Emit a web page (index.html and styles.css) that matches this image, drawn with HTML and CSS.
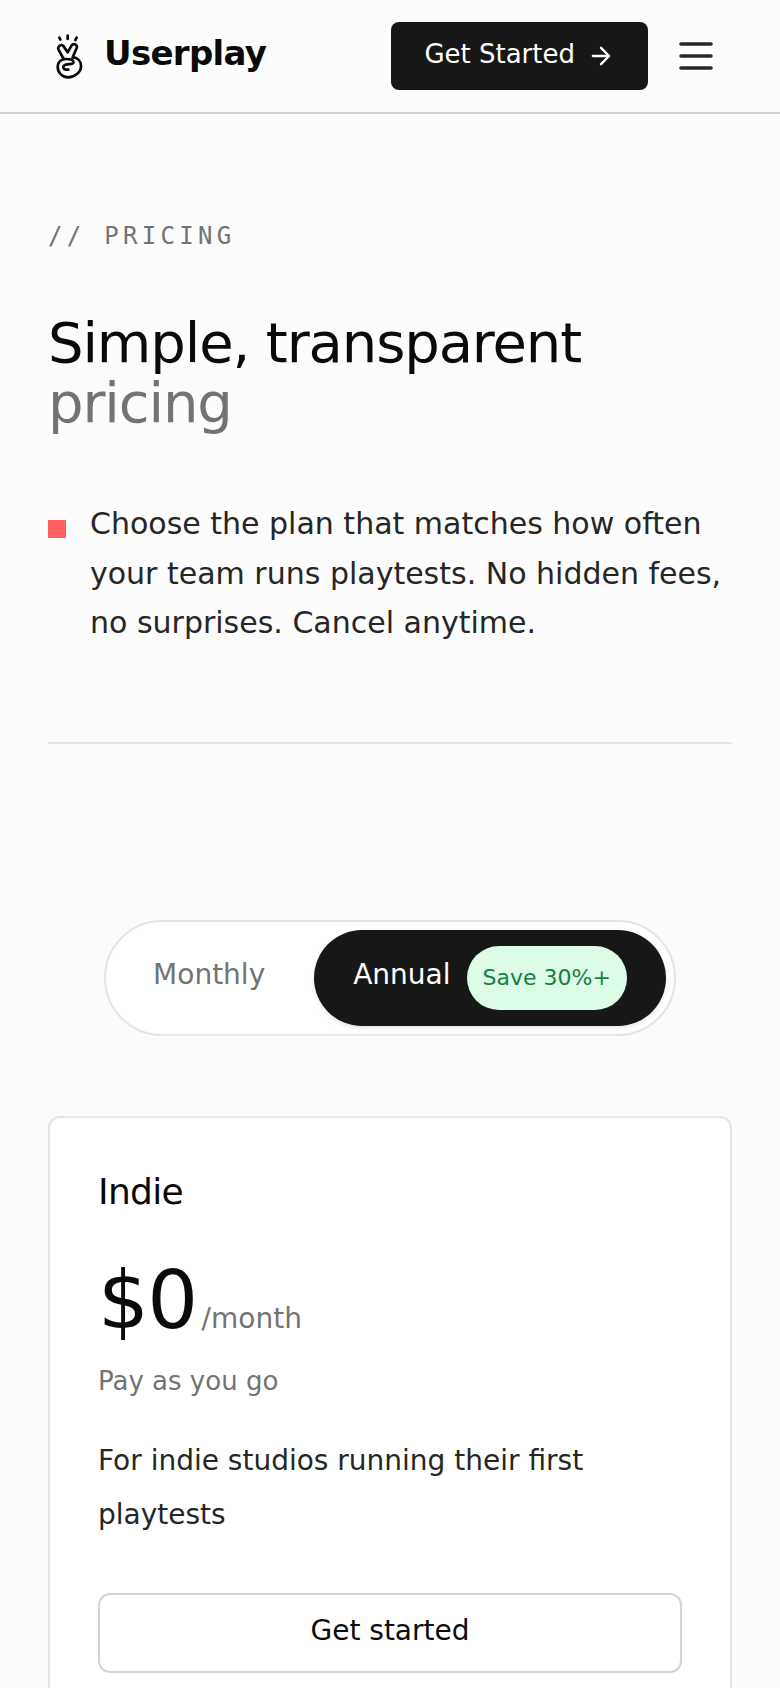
FILE: index.html
```html
<!DOCTYPE html>
<html lang="en">
<head>
    <meta charset="UTF-8">
    <meta name="viewport" content="width=device-width, initial-scale=1.0">
    <title>Userplay - Pricing</title>
    <link rel="stylesheet" href="styles.css">
</head>
<body>
    <!-- Header -->
    <header class="site-header">
        <a class="brand" href="#">
            <svg class="brand-icon" viewBox="0 0 84 135" fill="none" stroke="#0a0a0a" stroke-width="8" stroke-linecap="round" stroke-linejoin="round">
                <path d="M10 11l3 6M35 5v10M62 11l-4 7"/>
                <path d="M23 75L8 48C3 38 16 28 22 36L35 55L47 34C52 26 66 32 62 42L50 70C62 70 74 78 75 95C76 115 55 130 36 130C18 130 5 115 5 98C5 84 16 75 30 75C44 75 54 78 52 86C50 93 38 88 28 92C18 97 20 108 37 107"/>
            </svg>
            <span class="brand-name">Userplay</span>
        </a>
        <div class="header-actions">
            <a class="cta-btn" href="#">
                <span class="cta-label">Get Started</span>
                <svg class="cta-arrow" viewBox="0 0 24 24" fill="none" stroke="#fff" stroke-width="2" stroke-linecap="round" stroke-linejoin="round">
                    <path d="M5 12h14M12 5l7 7-7 7"/>
                </svg>
            </a>
            <button class="menu-btn" aria-label="Menu">
                <svg class="menu-icon" viewBox="0 0 34 28" fill="none" stroke="#262626" stroke-width="3.5" stroke-linecap="round">
                    <path d="M2 2h30M2 14h30M2 26h30"/>
                </svg>
            </button>
        </div>
    </header>

    <main class="page">
        <!-- Intro -->
        <section class="intro">
            <p class="eyebrow">// PRICING</p>
            <h1 class="headline">Simple, transparent <span class="headline-muted">pricing</span></h1>
            <div class="lead">
                <span class="lead-mark"></span>
                <p>Choose the plan that matches how often your team runs playtests. No hidden fees, no surprises. Cancel anytime.</p>
            </div>
        </section>

        <!-- Billing toggle -->
        <div class="toggle-wrap">
            <div class="toggle">
                <button class="toggle-option"><span class="toggle-label">Monthly</span></button>
                <button class="toggle-option active">
                    <span class="toggle-label">Annual</span>
                    <span class="save-badge">Save 30%+</span>
                </button>
            </div>
        </div>

        <!-- Plans -->
        <section class="plan-card">
            <h2 class="plan-name">Indie</h2>
            <div class="plan-price">
                <span class="price-value">$0</span>
                <span class="price-unit">/month</span>
            </div>
            <p class="plan-note">Pay as you go</p>
            <p class="plan-desc">For indie studios running their first playtests</p>
            <a class="plan-btn" href="#"><span class="plan-btn-label">Get started</span></a>
        </section>
    </main>
</body>
</html>
```

FILE: styles.css
```css
* {
    margin: 0;
    padding: 0;
    box-sizing: border-box;
}

html, body {
    height: 100%;
    overflow: hidden;
}

body {
    font-family: "DejaVu Sans", sans-serif;
    background-color: #fcfcfc;
    color: #0a0a0a;
}

a {
    color: inherit;
    text-decoration: none;
}

button {
    font-family: inherit;
    background: none;
    border: none;
    cursor: pointer;
}

/* Header */
.site-header {
    display: flex;
    align-items: center;
    justify-content: space-between;
    height: 114px;
    padding: 0 67px 0 56px;
    border-bottom: 2px solid #d4d4d4;
}

.brand {
    display: flex;
    align-items: center;
    gap: 20px;
}

.brand-icon {
    width: 28px;
    height: 45px;
}

.brand-name {
    font-size: 34px;
    font-weight: 700;
    letter-spacing: -0.68px;
    margin-top: -6px;
}

.header-actions {
    display: flex;
    align-items: center;
    gap: 31px;
}

.cta-btn {
    display: flex;
    align-items: center;
    gap: 12px;
    height: 68px;
    padding: 0 33px;
    background-color: #171717;
    color: #fff;
    font-size: 26px;
    border-radius: 8px;
}

.cta-label {
    margin-top: -5px;
}

.cta-arrow {
    width: 28px;
    height: 28px;
}

.menu-btn {
    display: flex;
}

.menu-icon {
    width: 34px;
    height: 28px;
}

/* Intro */
.page {
    padding: 0 48px;
}

.intro {
    padding: 108px 0 94px;
    border-bottom: 2px solid #e5e5e5;
}

.eyebrow {
    font-family: "DejaVu Sans Mono", monospace;
    font-size: 24px;
    letter-spacing: 4.3px;
    color: #737373;
    margin-bottom: 63px;
}

.headline {
    font-size: 56px;
    font-weight: 400;
    line-height: 60px;
    letter-spacing: -1.12px;
    margin-bottom: 66px;
}

.headline-muted {
    display: block;
    color: #737373;
}

.lead {
    display: flex;
    gap: 24px;
    align-items: flex-start;
}

.lead-mark {
    flex: none;
    width: 18px;
    height: 18px;
    margin-top: 21px;
    background-color: #ff5f5f;
}

.lead p {
    font-size: 30px;
    line-height: 49.5px;
    color: #262626;
}

/* Billing toggle */
.toggle-wrap {
    display: flex;
    justify-content: center;
    padding: 176px 0 80px;
}

.toggle {
    display: flex;
    align-items: center;
    gap: 8px;
    height: 116px;
    padding: 8px;
    background-color: #fff;
    border: 2px solid #e5e5e5;
    border-radius: 58px;
}

.toggle-option {
    display: flex;
    align-items: center;
    gap: 16px;
    height: 96px;
    padding: 0 41px 0 39px;
    font-size: 28px;
    color: #737373;
    border-radius: 48px;
}

.toggle-option.active {
    padding: 0 39px;
    background-color: #171717;
    color: #fff;
    box-shadow: 0 2px 4px rgba(0, 0, 0, 0.1);
}

.toggle-label {
    margin-top: -6px;
}

.save-badge {
    display: flex;
    align-items: center;
    height: 64px;
    padding: 0 16px;
    font-size: 22px;
    color: #15803d;
    background-color: #dcfce7;
    border-radius: 32px;
}

/* Plans */
.plan-card {
    padding: 48px 48px 96px;
    background-color: #fff;
    border: 2px solid #e5e5e5;
    border-radius: 12px;
}

.plan-name {
    font-size: 36px;
    font-weight: 400;
    letter-spacing: -0.72px;
    margin-top: 5px;
    margin-bottom: 49px;
}

.plan-price {
    display: flex;
    align-items: baseline;
    gap: 5px;
    margin-bottom: 25px;
}

.price-value {
    font-size: 80px;
    letter-spacing: -1.6px;
    line-height: 1;
}

.price-unit {
    font-size: 28px;
    color: #737373;
}

.plan-note {
    font-size: 26px;
    color: #737373;
    margin-bottom: 38px;
}

.plan-desc {
    font-size: 28px;
    line-height: 54px;
    color: #262626;
    margin-bottom: 51px;
}

.plan-btn {
    display: flex;
    align-items: center;
    justify-content: center;
    height: 80px;
    font-size: 28px;
    border: 2px solid #d4d4d4;
    border-radius: 12px;
}

.plan-btn-label {
    margin-top: -4px;
}
```
